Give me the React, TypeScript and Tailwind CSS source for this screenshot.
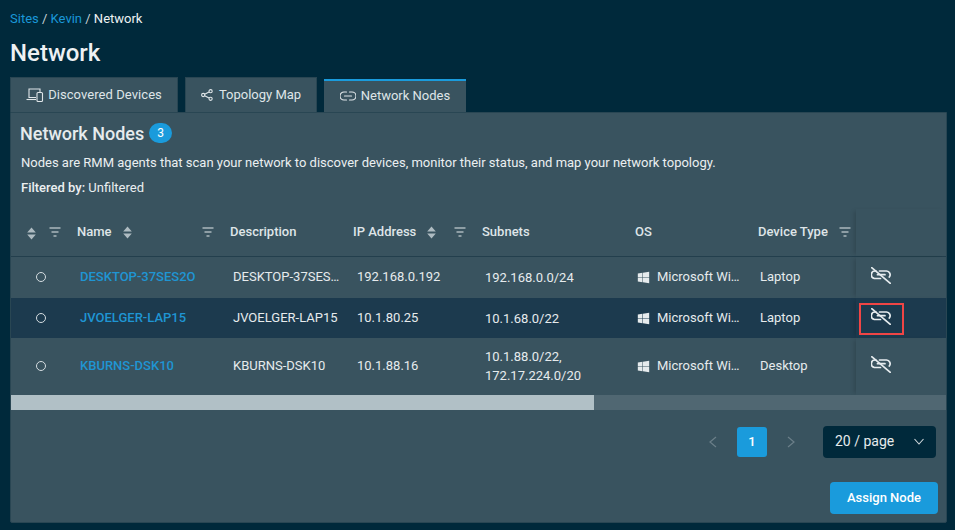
import React from "react";
import { FaWindows } from "react-icons/fa";

const FilterIcon = () => (
  <svg width="12" height="10" viewBox="0 0 12 10" className="shrink-0">
    <path d="M0.5 1h11M2.5 5h7M4.5 9h3" stroke="#e3e9ec" strokeWidth="1.2" fill="none" />
  </svg>
);
const SortIcon = () => (
  <svg width="9" height="13" viewBox="0 0 9 13" className="shrink-0 mt-[2px]">
    <path d="M4.5 0.5L8.8 5.5H0.2zM4.5 12.5L0.2 7.5h8.6z" fill="#aebbc1" />
  </svg>
);
const LinkOff = () => (
  <svg width="20" height="17" viewBox="0 0 20 17" fill="none" stroke="#e6ecef" strokeWidth="1.7" strokeLinecap="round">
    <path d="M0.7 0.7L19.3 16.3" />
    <path d="M5 4H4.2a3.7 3.7 0 0 0-1 7.3c1 .2 2 .2 3 .2h3.3" />
    <path d="M8.5 4h7a3.7 3.7 0 0 1 2.8 6" />
    <path d="M6.5 7.7h7.5" />
  </svg>
);

const Th = ({ w, children, cls = "pl-2" }: { w: string; children: React.ReactNode; cls?: string }) => (
  <div className={`${w} ${cls} shrink-0 flex items-center font-medium text-[13px] text-[#dfe5e8]`}>{children}</div>
);

const rows = [
  { name: "DESKTOP-37SES2O", desc: "DESKTOP-37SES…", ip: "192.168.0.192", sub: ["192.168.0.0/24"], type: "Laptop", h: "h-[41px] pb-[1px]", act: "-mb-[1px]", bg: "", boxed: false },
  { name: "JVOELGER-LAP15", desc: "JVOELGER-LAP15", ip: "10.1.80.25", sub: ["10.1.68.0/22"], type: "Laptop", h: "h-[40px]", act: "", bg: "bg-[#1c3a4e]", boxed: true },
  { name: "KBURNS-DSK10", desc: "KBURNS-DSK10", ip: "10.1.88.16", sub: ["10.1.88.0/22,", "172.17.224.0/20"], type: "Desktop", h: "h-[57px] pb-[1px]", act: "-mb-[1px]", bg: "", boxed: false },
];

export default function App() {
  return (
    <div className="w-[955px] h-[530px] bg-[#00293b] overflow-hidden pl-[10px] pr-[8px] pt-[11px] text-[13px] text-[#e6ebed] font-['Roboto',sans-serif]">
      <div className="h-[16px] leading-[16px] text-[13px] text-[#c9d3d8]">
        <span className="text-[#1a97d8]">Sites</span> / <span className="text-[#1a97d8]">Kevin</span> / <span className="text-[#eef2f4]">Network</span>
      </div>
      <h1 className="mt-[12px] h-[28px] leading-[28px] text-[24px] font-medium text-[#eef1f3]">Network</h1>
      <div className="mt-[10px] flex items-end h-[35px] gap-[7px]">
        <div className="w-[168px] h-[35px] bg-[#39535f] border-t border-l border-r border-[#294653] flex items-center justify-center gap-[4px] text-[#dfe5e8] text-[13px] tracking-[0.005em]">
          <svg width="18" height="16" viewBox="0 0 18 16" fill="none" stroke="#e0e6e9" strokeWidth="1.1">
            <path d="M10 10.5H3V2h11v3" />
            <path d="M0.5 12.5H10" />
            <rect x="11" y="5.5" width="5.5" height="9" rx="1" />
          </svg>
          Discovered Devices
        </div>
        <div className="w-[132px] h-[35px] bg-[#39535f] border-t border-l border-r border-[#294653] flex items-center justify-center gap-[6px] text-[#dfe5e8] text-[13px]">
          <svg width="12" height="12" viewBox="0 0 12 12" fill="none" stroke="#e0e6e9" strokeWidth="1.1">
            <circle cx="2.2" cy="6" r="1.6" />
            <circle cx="9.6" cy="2.2" r="1.6" />
            <circle cx="9.6" cy="9.8" r="1.6" />
            <path d="M3.7 5.2L8 3M3.7 6.8L8 9" />
          </svg>
          Topology Map
        </div>
        <div className="w-[142px] h-[33px] bg-[#39535f] border-t-[2px] border-[#1a9bdc] flex items-center justify-center gap-[5px] pb-[2px] text-[#dfe5e8] text-[13px]">
          <svg width="16" height="10" viewBox="0 0 16 10" fill="none" stroke="#e0e6e9" strokeWidth="1.2" strokeLinecap="round">
            <path d="M6.5 1H4a4 4 0 0 0 0 8h2.5M9.5 1H12a4 4 0 0 1 0 8H9.5M4.5 5h7" />
          </svg>
          Network Nodes
        </div>
      </div>
      <div className="w-[937px] h-[411px] bg-[#39535f] border border-[#294653] rounded-b-[2px] flex flex-col">
        <div className="pl-[9px] pt-[9px] flex items-center h-[31px] gap-[5px]">
          <span className="text-[18px] font-medium text-[#e6ebed]">Network Nodes</span>
          <span className="w-[23px] h-[20px] rounded-full bg-[#1a9bdc] text-white text-[12px] flex items-center justify-center">3</span>
        </div>
        <p className="pl-[10px] mt-[11px] h-[16px] leading-[16px] text-[13px] text-[#ebeff1]">
          Nodes are RMM agents that scan your network to discover devices, monitor their status, and map your network topology.
        </p>
        <p className="pl-[10px] mt-[9px] h-[16px] leading-[16px] text-[13px] text-[#ebeff1]">
          <span className="font-medium">Filtered by:</span> Unfiltered
        </p>
        <div className="mt-[13px] h-[48px] flex border-b border-[#233f4d]">
          <div className="w-[58px] shrink-0 flex items-center pl-[16px] gap-[13px] pb-[1px]"><SortIcon /><FilterIcon /></div>
          <Th w="w-[153px] pb-[2px]"><span>Name</span><span className="ml-[11px]"><SortIcon /></span><span className="ml-auto mr-[8px]"><FilterIcon /></span></Th>
          <Th w="w-[124px] pb-[2px]">Description</Th>
          <Th w="w-[128px] pb-[2px]" cls="pl-[7px]"><span>IP Address</span><span className="ml-[11px]"><SortIcon /></span><span className="ml-auto mr-[8px] pl-1"><FilterIcon /></span></Th>
          <Th w="w-[153px] pb-[2px]">Subnets</Th>
          <Th w="w-[123px] pb-[2px]">OS</Th>
          <Th w="w-[106px] pb-[2px]"><span>Device Type</span><span className="ml-[11px]"><FilterIcon /></span></Th>
          <div className="flex-1 shadow-[-4px_0_4px_-2px_rgba(0,0,0,0.14)]" />
        </div>
        {rows.map((r) => (
          <div key={r.name} className={`${r.h} ${r.bg} flex items-center shrink-0 text-[13px] text-[#e6ebed]`}>
            <div className="w-[58px] shrink-0 flex justify-end pr-[23px]">
              <span className="w-[10px] h-[10px] rounded-full border border-[#d5dde1]" />
            </div>
            <div className="w-[153px] shrink-0 pl-[11px] text-[#1f95d3] font-medium">{r.name}</div>
            <div className="w-[124px] shrink-0 pl-[11px] whitespace-nowrap">{r.desc}</div>
            <div className="w-[128px] shrink-0 pl-[11px]">{r.ip}</div>
            <div className="w-[153px] shrink-0 pl-[11px] leading-[19px]">
              {r.sub.map((s) => <div key={s}>{s}</div>)}
            </div>
            <div className="w-[123px] shrink-0 pl-[10px] flex items-center gap-[7px] whitespace-nowrap">
              <FaWindows className="text-[#e6ebed] w-[13px] h-[13px]" />
              Microsoft Wi…
            </div>
            <div className="w-[106px] shrink-0 pl-[10px]">{r.type}</div>
            <div className={`${r.act} flex-1 self-stretch shadow-[-4px_0_4px_-2px_rgba(0,0,0,0.14)] flex items-center pl-[15px] pb-[4px]`}>
              <span className="relative flex"><LinkOff />
                {r.boxed && <span className="absolute left-[-12px] top-[-5px] w-[45px] h-[32px] border-[2px] border-[#f04545]" />}
              </span>
            </div>
          </div>
        ))}
        <div className="h-[15px] bg-[#506772] shrink-0 flex">
          <div className="w-[583px] bg-[#b1c0c6]" />
        </div>
        <div className="mt-[16px] flex items-center h-[32px] pr-[10px] justify-end">
          <svg width="10" height="12" viewBox="0 0 10 12" fill="none" stroke="#6b7f89" strokeWidth="1.2" className="mr-[19px]"><path d="M8 1L2 6l6 5" /></svg>
          <div className="w-[30px] h-[30px] rounded-[3px] bg-[#1a9bdc] text-white font-medium text-[13px] flex items-center justify-center">1</div>
          <svg width="10" height="12" viewBox="0 0 10 12" fill="none" stroke="#6b7f89" strokeWidth="1.2" className="ml-[19px] mr-[27px]"><path d="M2 1l6 5-6 5" /></svg>
          <div className="w-[113px] h-[32px] rounded-[4px] bg-[#00293b] flex items-center pl-[12px] pr-[12px] pb-[2px] justify-between text-[14px] text-[#e6ebed]">
            20 / page
            <svg width="10" height="7" viewBox="0 0 10 7" fill="none" stroke="#cfd8dc" strokeWidth="1.1"><path d="M0.5 1L5 6l4.5-5" /></svg>
          </div>
        </div>
        <div className="mt-[24px] flex justify-end pr-[8px]">
          <div className="w-[108px] h-[32px] rounded-[4px] bg-[#1a9bdc] text-white font-medium text-[13px] flex items-center justify-center">Assign Node</div>
        </div>
      </div>
    </div>
  );
}
